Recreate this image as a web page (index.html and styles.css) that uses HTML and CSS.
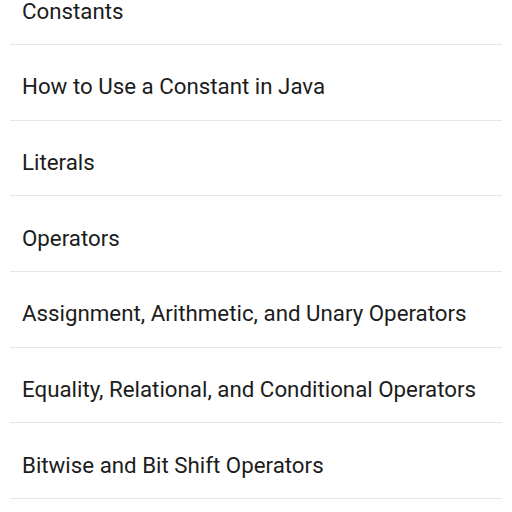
FILE: index.html
```html
<!DOCTYPE html>
<html>
<head>
<meta charset="utf-8">
<link rel="stylesheet" href="styles.css">
</head>
<body>
<ul class="list">
  <li class="item">Constants</li>
  <li class="item">How to Use a Constant in Java</li>
  <li class="item">Literals</li>
  <li class="item">Operators</li>
  <li class="item">Assignment, Arithmetic, and Unary Operators</li>
  <li class="item">Equality, Relational, and Conditional Operators</li>
  <li class="item">Bitwise and Bit Shift Operators</li>
</ul>
</body>
</html>
```
FILE: styles.css
```css
html, body {
  margin: 0;
  padding: 0;
  background: #ffffff;
  overflow: hidden;
}
.list {
  list-style: none;
  margin: -30.67px 10px 0 10px;
  padding: 0;
  font-family: Roboto, "Noto Sans", sans-serif;
  font-size: 22.3px;
  color: #1c1c1c;
}
.item {
  box-sizing: border-box;
  height: 75.67px;
  padding: 8px 0 0 12px;
  display: flex;
  align-items: center;
  border-bottom: 1px solid #e6e6e6;
  white-space: nowrap;
}
```
